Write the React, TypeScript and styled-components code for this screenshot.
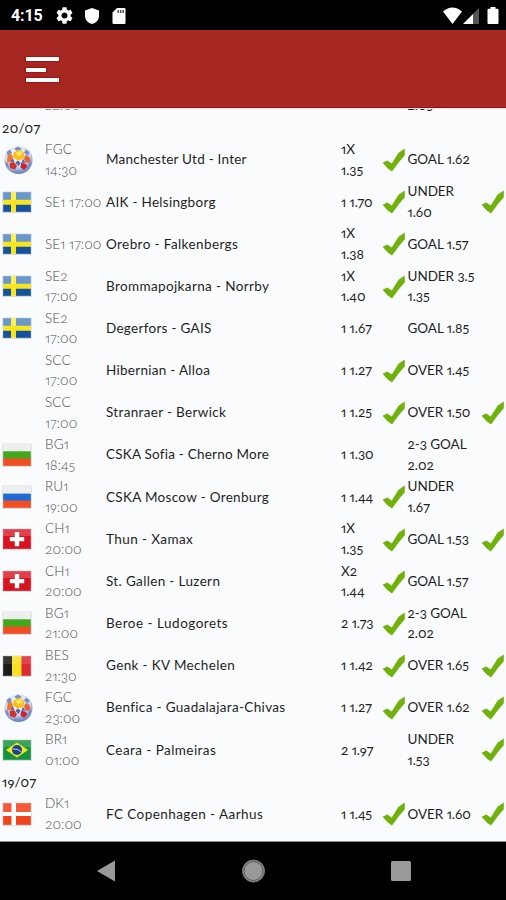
import React from 'react';
import styled, { createGlobalStyle, css } from 'styled-components';

const GlobalStyle = createGlobalStyle`
  *, *::before, *::after { box-sizing: border-box; }
  body { margin: 0; background: #000; }
`;

const Screen = styled.div`
  width: 506px;
  height: 900px;
  display: flex;
  flex-direction: column;
  overflow: hidden;
  background: #000;
  font-family: Lato, 'Open Sans', sans-serif;
  font-variant-numeric: oldstyle-nums proportional-nums;
`;

const StatusBar = styled.header`
  flex: none;
  height: 29.5px;
  padding: 2px 7.5px 0 11px;
  display: flex;
  align-items: center;
  justify-content: space-between;
  color: #fff;
  svg { display: block; }
`;

const StatusGroup = styled.div<{ $gap: number }>`
  display: flex;
  align-items: center;
  gap: ${(p) => p.$gap}px;
`;

const Clock = styled.span`
  width: 32px;
  margin-right: 1px;
  font: 700 16px/20px Roboto, sans-serif;
  font-variant-numeric: lining-nums;
  letter-spacing: -0.1px;
`;

const AppBar = styled.nav`
  flex: none;
  height: 78.5px;
  padding: 0 26px;
  display: flex;
  align-items: center;
  background: #a72722;
  border-bottom: 1px solid #a30d0c;
`;

const MenuButton = styled.button`
  display: flex;
  flex-direction: column;
  gap: 6.5px;
  margin: 3px 0 0;
  padding: 0;
  border: 0;
  background: none;
`;

const MenuLine = styled.span<{ $short?: boolean }>`
  width: ${(p) => (p.$short ? 20 : 33)}px;
  height: 4px;
  background: #fff;
  box-shadow: 0 0 1px 1px rgba(156, 12, 10, 0.6);
`;

const TipList = styled.main`
  flex: none;
  height: 734px;
  overflow: hidden;
  background: #f9fbfd;
  border-top: 1px solid #fbe3df;
  border-bottom: 1px solid #8d8d8d;
`;

const Scroller = styled.div`
  margin-top: -34.6px;
`;

const DateHeading = styled.h2`
  height: 22px;
  margin: 0;
  padding: 0 2px;
  font-size: 13.5px;
  line-height: 22px;
  font-weight: 400;
  letter-spacing: 0.35px;
  color: #222;
`;

const TipRow = styled.div`
  height: 42.16px;
  display: grid;
  grid-template-columns: 45px 61px 235px 41px 25.5px 73.5px 25px;
  align-items: center;
`;

const FlagCell = styled.div`
  padding-left: 1.5px;
  svg { display: block; }
`;

const cellText = css`
  font-size: 13.5px;
  line-height: 20.6px;
  white-space: pre;
  color: #1f1f1f;
`;

const League = styled.div`
  ${cellText}
  font-weight: 300;
  letter-spacing: 0.1px;
  color: #4c4c4c;
`;

const Match = styled.div<{ $tracking: number }>`
  ${cellText}
  letter-spacing: ${(p) => p.$tracking}px;
`;

const Tip = styled.div`
  ${cellText}
  letter-spacing: -0.05px;
`;

const TickCell = styled.div`
  padding-top: 1px;
  svg { display: block; }
`;

const NavBar = styled.footer`
  flex: 1;
  display: grid;
  grid-template-columns: 18px 24px 20px;
  column-gap: 126px;
  align-items: center;
  padding: 0 0 0 97px;
  background: #000;
  svg { display: block; }
`;

type FlagCode = 'ball' | 'se' | 'bg' | 'ru' | 'ch' | 'be' | 'br' | 'dk' | 'none';

const Ball = () => (
  <svg width="32" height="32" viewBox="0 0 32 32">
    <defs>
      <radialGradient id="ball" cx="45%" cy="30%" r="72%">
        <stop offset="0" stopColor="#fff" />
        <stop offset=".6" stopColor="#d3dbee" />
        <stop offset="1" stopColor="#5874b4" />
      </radialGradient>
    </defs>
    <circle cx="16.500" cy="16" r="14" fill="url(#ball)" />
    <path d="M16 2.400 20 5l-4 2.500-4-2.500zM4.500 8 8 5.500l2 3-4 3.500zM27.500 8 24 5.500l-2 3 4 3.500zM3 18l3 1 1 5-2.500-1zM29.500 18l-3 1-1 5 2.500-1zM12 26.500h7l-1.500 3h-4z" fill="#7390ca" />
    <path d="M11.500 8.500 17 5.500l5.500 3.500-1 6-6 1.500-4.500-3z" fill="#fdbd1c" />
    <path d="m13.500 9 4.500-2 3 3-5 2.500z" fill="#ffe95e" />
    <path d="m5.500 12 3.500-3 2 4.500-2 4.500-4 .500z" fill="#f0762f" />
    <path d="m23.500 11 4 2 1 5-4.500 1-2-4z" fill="#e8603a" />
    <path d="m7.500 19 4.500-1 3 4-2 3.500-5-1.500z" fill="#d12f2c" />
    <path d="m19 19 4.500 .500 2 3-3.500 3.500-3.500-2.500z" fill="#cb2333" />
    <path d="m15.500 16.500 3 2-2 3.500-3-3zM21 15l2.500 3.500-4 .500zM10.500 14l2 3.500-4 1z" fill="#4a68ac" />
  </svg>
);

const flagArt: Record<string, React.ReactNode> = {
  se: <><path fill="#14529d" d="M0 0h28v20H0z" /><path fill="#6a98ca" d="M0 0h28v8H0z" /><path fill="#f8e51d" d="M8 0h5v20H8zM0 7.800h28v5H0z" /><path fill="#fff47c" d="M8 0h5v8H8z" opacity=".6" /></>,
  bg: <><path fill="#eee" d="M0 0h28v7.500H0z" /><path fill="#43a91c" d="M0 7.300h28V15H0z" /><path fill="#f04e23" d="M0 14.500h28V22H0z" /></>,
  ru: <><path fill="#eee" d="M0 0h28v8H0z" /><path fill="#1e6bd4" d="M0 7.600h28V15H0z" /><path fill="#f04e23" d="M0 14.500h28V22H0z" /></>,
  ch: <><path fill="#d8121f" d="M0 0h28v20H0z" /><path fill="#e4505a" d="M0 0h28v7H0z" opacity=".75" /><path fill="#fff" d="M11.800 3h4.400v5h5v4.200h-5v5h-4.400v-5h-5V8h5z" /></>,
  be: <><path fill="#1b1b18" d="M0 0h9.500v20H0z" /><path fill="#f9df22" d="M9 0h10v20H9z" /><path fill="#dc2a35" d="M18.500 0H28v20h-9.500z" /><path fill="#fff" d="M0 0h28v8H0z" opacity=".12" /></>,
  br: <><path fill="#169340" d="M0 0h28v20H0z" /><path fill="#56ad6d" d="M0 0h28v7H0z" opacity=".6" /><path fill="#f6e41e" d="m14 2.500 11 7.500-11 7.500L3 10z" /><circle cx="14" cy="10" r="5" fill="#17448f" /><path d="M9.500 9q5-.800 8.800 2.800" stroke="#bdd0e6" fill="none" /></>,
  dk: <><path fill="#f0441f" d="M0 0h28v22H0z" /><path fill="#fff" d="M8.500 0h4.500v22H8.500zM0 9h28v4H0z" /><path fill="#fff" d="M0 0h28v9H0z" opacity=".12" /></>,
};

const Flag = ({ code }: { code: FlagCode }) => {
  if (code === 'none') return null;
  if (code === 'ball') return <Ball />;
  const h = ['bg', 'ru', 'dk'].includes(code) ? 22 : 20;
  return (
    <svg width="30" height={h + 2} viewBox={`-1 -1 30 ${h + 2}`}>
      <rect x="-.5" y="-.3" width="29" height={h + 1} fill="#9ba1a6" opacity=".5" />
      {flagArt[code]}
      <rect x=".5" y=".5" width="27" height={h - 1} fill="none" stroke="#fff" opacity=".15" />
    </svg>
  );
};

const Tick = () => (
  <svg width="24" height="24" viewBox="0 0 24 24">
    <path d="M.6 14.800 5.200 12.600 9.800 15.600 16.500 4.800 22.800 .400V7.200L17 14 10 23.400 5.500 20.300Z" fill="#70b10b" />
  </svg>
);

interface TipData {
  flag: FlagCode;
  league: string;
  match: string;
  tracking: number;
  tip: string;
  won?: boolean;
  goals: string;
  goalsWon?: boolean;
}

const today: TipData[] = [
  { flag: 'ball', league: 'FGC\n14:30', match: 'Manchester Utd - Inter', tracking: 0.23, tip: '1X\n1.35', won: true, goals: 'GOAL 1.62' },
  { flag: 'se', league: 'SE1 17:00', match: 'AIK - Helsingborg', tracking: 0.29, tip: '1 1.70', won: true, goals: 'UNDER\n1.60', goalsWon: true },
  { flag: 'se', league: 'SE1 17:00', match: 'Orebro - Falkenbergs', tracking: 0.4, tip: '1X\n1.38', won: true, goals: 'GOAL 1.57' },
  { flag: 'se', league: 'SE2\n17:00', match: 'Brommapojkarna - Norrby', tracking: 0.37, tip: '1X\n1.40', won: true, goals: 'UNDER 3.5\n1.35' },
  { flag: 'se', league: 'SE2\n17:00', match: 'Degerfors - GAIS', tracking: 0.28, tip: '1 1.67', goals: 'GOAL 1.85' },
  { flag: 'none', league: 'SCC\n17:00', match: 'Hibernian - Alloa', tracking: 0.28, tip: '1 1.27', won: true, goals: 'OVER 1.45' },
  { flag: 'none', league: 'SCC\n17:00', match: 'Stranraer - Berwick', tracking: 0.33, tip: '1 1.25', won: true, goals: 'OVER 1.50', goalsWon: true },
  { flag: 'bg', league: 'BG1\n18:45', match: 'CSKA Sofia - Cherno More', tracking: 0.22, tip: '1 1.30', goals: '2-3 GOAL\n2.02' },
  { flag: 'ru', league: 'RU1\n19:00', match: 'CSKA Moscow - Orenburg', tracking: 0.31, tip: '1 1.44', won: true, goals: 'UNDER\n1.67' },
  { flag: 'ch', league: 'CH1\n20:00', match: 'Thun - Xamax', tracking: 0.41, tip: '1X\n1.35', won: true, goals: 'GOAL 1.53', goalsWon: true },
  { flag: 'ch', league: 'CH1\n20:00', match: 'St. Gallen - Luzern', tracking: 0.35, tip: 'X2\n1.44', won: true, goals: 'GOAL 1.57' },
  { flag: 'bg', league: 'BG1\n21:00', match: 'Beroe - Ludogorets', tracking: 0.49, tip: '2 1.73', won: true, goals: '2-3 GOAL\n2.02' },
  { flag: 'be', league: 'BES\n21:30', match: 'Genk - KV Mechelen', tracking: 0.36, tip: '1 1.42', won: true, goals: 'OVER 1.65', goalsWon: true },
  { flag: 'ball', league: 'FGC\n23:00', match: 'Benfica - Guadalajara-Chivas', tracking: 0.34, tip: '1 1.27', won: true, goals: 'OVER 1.62', goalsWon: true },
  { flag: 'br', league: 'BR1\n01:00', match: 'Ceara - Palmeiras', tracking: 0.44, tip: '2 1.97', goals: 'UNDER\n1.53', goalsWon: true },
];

const yesterday: TipData[] = [
  { flag: 'dk', league: 'DK1\n20:00', match: 'FC Copenhagen - Aarhus', tracking: 0.43, tip: '1 1.45', won: true, goals: 'OVER 1.60', goalsWon: true },
];

const previous: TipData = { flag: 'none', league: '\n22:00', match: '', tracking: 0, tip: '', goals: '\n2.05' };

const Row = ({ data }: { data: TipData }) => (
  <TipRow>
    <FlagCell><Flag code={data.flag} /></FlagCell>
    <League>{data.league}</League>
    <Match $tracking={data.tracking}>{data.match}</Match>
    <Tip>{data.tip}</Tip>
    <TickCell>{data.won && <Tick />}</TickCell>
    <Tip>{data.goals}</Tip>
    <TickCell>{data.goalsWon && <Tick />}</TickCell>
  </TipRow>
);

export default function App() {
  return (
    <>
      <GlobalStyle />
      <Screen>
        <StatusBar>
          <StatusGroup $gap={12}>
            <Clock>4:15</Clock>
            <svg width="17" height="17" viewBox="2 2 20 20" fill="#fff">
              <path d="M19.140 12.940c.040-.300.060-.610.060-.940 0-.320-.020-.640-.070-.940l2.030-1.580c.180-.140.230-.410.120-.610l-1.920-3.320c-.120-.220-.370-.290-.590-.220l-2.390.960c-.500-.380-1.030-.700-1.620-.940l-.360-2.540c-.040-.240-.240-.410-.480-.410h-3.840c-.240 0-.430.170-.470.410l-.360 2.540c-.590.240-1.130.570-1.620.940l-2.390-.960c-.220-.080-.470 0-.590.220L2.740 8.870c-.120.210-.080.470.120.610l2.030 1.580c-.050.300-.090.630-.090.940s.020.640.070.940l-2.030 1.580c-.180.140-.230.410-.120.610l1.920 3.320c.120.220.370.290.590.220l2.390-.960c.500.380 1.030.700 1.620.940l.360 2.540c.050.240.240.410.480.410h3.840c.240 0 .440-.170.470-.410l.360-2.540c.590-.240 1.130-.560 1.620-.940l2.390.960c.220.080.470 0 .590-.220l1.920-3.320c.120-.220.070-.470-.120-.610l-2.010-1.580zM12 15.600c-1.980 0-3.600-1.620-3.600-3.600s1.620-3.600 3.600-3.600 3.600 1.620 3.600 3.600-1.620 3.600-3.600 3.600z" />
            </svg>
            <svg width="14" height="16" viewBox="0 0 14 16" fill="#fff">
              <path d="M7 0 14 2.600V8c0 4-3 7-7 8-4-1-7-4-7-8V2.600z" />
            </svg>
            <svg width="15" height="16" viewBox="-1.500 0 15 16">
              <path d="M4.500 0H12q1 0 1 1v14q0 1-1 1H1q-1 0-1-1V4.500z" fill="#fff" />
              <path d="M5 2h1.500v3H5zM7.500 2H9v3H7.500zM10 2h1.500v3H10z" fill="#555" />
            </svg>
          </StatusGroup>
          <StatusGroup $gap={1}>
            <svg width="19" height="17" viewBox="0 0 19 17" fill="#fff">
              <path d="M9.500 17 0 4.500Q9.500-3.500 19 4.500z" />
            </svg>
            <svg width="16" height="16" viewBox="0 0 16 16">
              <path d="M0 16 10 6v10z" fill="#fff" />
              <path d="m10 6 6-6v16h-6z" fill="#565656" />
            </svg>
            <svg width="19" height="17" viewBox="-7.500 0 19 17" fill="#fff">
              <path d="M3 1.800V0h5v1.800h2q1 0 1 1V16q0 1-1 1H1q-1 0-1-1V2.800q0-1 1-1z" />
            </svg>
          </StatusGroup>
        </StatusBar>
        <AppBar>
          <MenuButton aria-label="Menu">
            <MenuLine />
            <MenuLine $short />
            <MenuLine />
          </MenuButton>
        </AppBar>
        <TipList>
          <Scroller>
            <Row data={previous} />
            <DateHeading>20/07</DateHeading>
            {today.map((t) => <Row key={t.match} data={t} />)}
            <DateHeading>19/07</DateHeading>
            {yesterday.map((t) => <Row key={t.match} data={t} />)}
          </Scroller>
        </TipList>
        <NavBar>
          <svg width="18" height="22" viewBox="0 0 18 22"><path d="M0 11 18 .500v21z" fill="#999" /></svg>
          <svg width="24" height="24" viewBox="0 0 24 24">
            <circle cx="12.500" cy="12" r="11" fill="#999" stroke="#777" strokeWidth="1" />
            <circle cx="12.500" cy="12" r="9.500" fill="none" stroke="#555" strokeWidth="1" />
          </svg>
          <svg width="20" height="20" viewBox="0 0 20 20"><rect width="20" height="20" rx="1.500" fill="#999" /></svg>
        </NavBar>
      </Screen>
    </>
  );
}
